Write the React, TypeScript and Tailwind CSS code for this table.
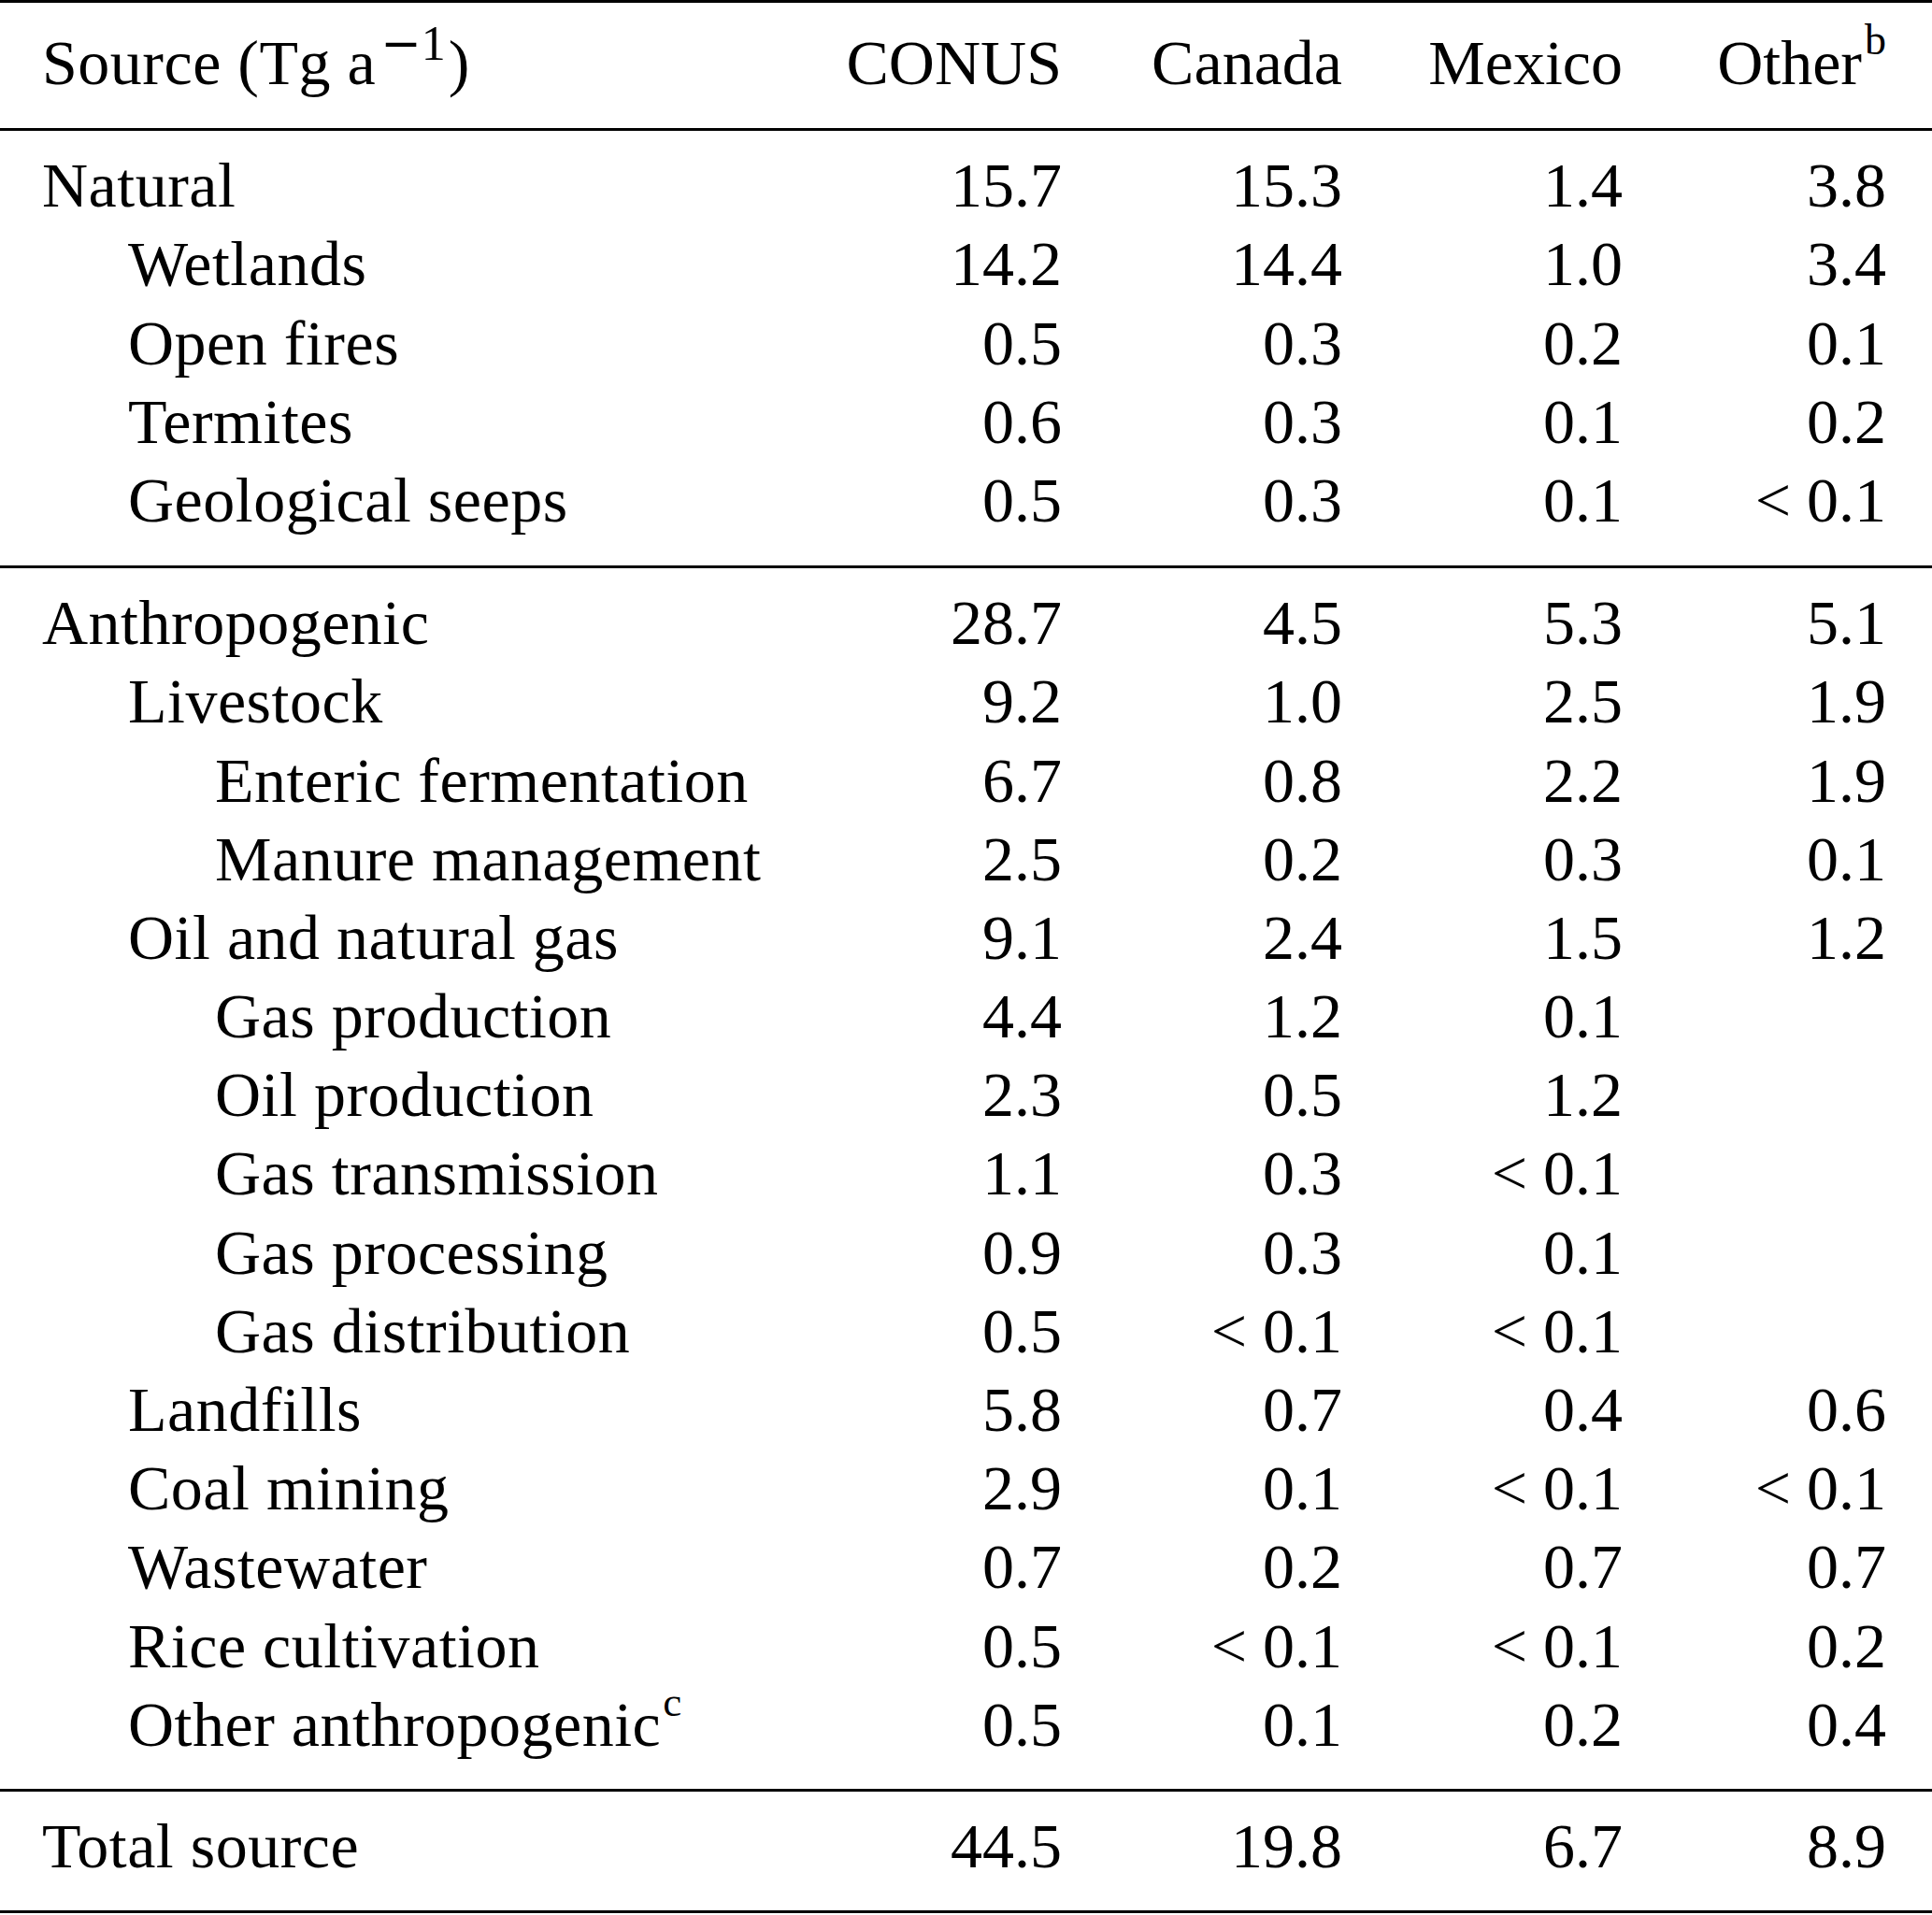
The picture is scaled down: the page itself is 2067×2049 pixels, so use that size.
import React from "react";

type Row = { label: React.ReactNode; level: 0 | 1 | 2; v: [string, string, string, string] };

const natural: Row[] = [
  { label: "Natural", level: 0, v: ["15.7", "15.3", "1.4", "3.8"] },
  { label: "Wetlands", level: 1, v: ["14.2", "14.4", "1.0", "3.4"] },
  { label: "Open fires", level: 1, v: ["0.5", "0.3", "0.2", "0.1"] },
  { label: "Termites", level: 1, v: ["0.6", "0.3", "0.1", "0.2"] },
  { label: "Geological seeps", level: 1, v: ["0.5", "0.3", "0.1", "< 0.1"] },
];

const anthro: Row[] = [
  { label: "Anthropogenic", level: 0, v: ["28.7", "4.5", "5.3", "5.1"] },
  { label: "Livestock", level: 1, v: ["9.2", "1.0", "2.5", "1.9"] },
  { label: "Enteric fermentation", level: 2, v: ["6.7", "0.8", "2.2", "1.9"] },
  { label: "Manure management", level: 2, v: ["2.5", "0.2", "0.3", "0.1"] },
  { label: "Oil and natural gas", level: 1, v: ["9.1", "2.4", "1.5", "1.2"] },
  { label: "Gas production", level: 2, v: ["4.4", "1.2", "0.1", ""] },
  { label: "Oil production", level: 2, v: ["2.3", "0.5", "1.2", ""] },
  { label: "Gas transmission", level: 2, v: ["1.1", "0.3", "< 0.1", ""] },
  { label: "Gas processing", level: 2, v: ["0.9", "0.3", "0.1", ""] },
  { label: "Gas distribution", level: 2, v: ["0.5", "< 0.1", "< 0.1", ""] },
  { label: "Landfills", level: 1, v: ["5.8", "0.7", "0.4", "0.6"] },
  { label: "Coal mining", level: 1, v: ["2.9", "0.1", "< 0.1", "< 0.1"] },
  { label: "Wastewater", level: 1, v: ["0.7", "0.2", "0.7", "0.7"] },
  { label: "Rice cultivation", level: 1, v: ["0.5", "< 0.1", "< 0.1", "0.2"] },
  {
    label: (
      <>
        Other anthropogenic<sup className="text-[45px] -top-[32px] ml-[2px]">c</sup>
      </>
    ),
    level: 1,
    v: ["0.5", "0.1", "0.2", "0.4"],
  },
];

const total: Row[] = [{ label: "Total source", level: 0, v: ["44.5", "19.8", "6.7", "8.9"] }];

const indent = ["pl-0", "pl-[92px]", "pl-[185px]"];

const gridCls = "grid grid-cols-[1fr_300px_300px_300px_282px] h-[84.2px] leading-[84.2px] whitespace-nowrap";

function TableRow({ r }: { r: Row }) {
  return (
    <div className={gridCls}>
      <div className={`${indent[r.level]} tracking-[0.5px]`}>{r.label}</div>
      {r.v.map((x, i) => (
        <div key={i} className="text-right">
          {x}
        </div>
      ))}
    </div>
  );
}

function Rule() {
  return <div className="border-t-[3px] border-black ml-[-45px] mr-[-49px]" />;
}

export default function App() {
  return (
    <div className="w-[2067px] h-[2049px] overflow-hidden bg-white text-black">
      <div
        className="text-[68px] pl-[45px] pr-[49px]"
        style={{ fontFamily: '"Liberation Serif", "Times New Roman", serif' }}
      >
        <Rule />
        {/* header */}
        <div className="pt-[22px] pb-[28px]">
          <div className={gridCls}>
            <div className="tracking-[0.5px]">
              Source (Tg a
              <sup className="text-[52px] -top-[26px] ml-[5px] mr-[3px] tracking-normal">
                <span style={{ fontFamily: '"DejaVu Serif", serif' }}>−</span>1
              </sup>
              )
            </div>
            <div className="text-right">CONUS</div>
            <div className="text-right">Canada</div>
            <div className="text-right">Mexico</div>
            <div className="text-right">
              Other<sup className="text-[46px] -top-[32px] ml-[3px]">b</sup>
            </div>
          </div>
        </div>
        <Rule />
        <div className="pt-[16px] pb-[28px]">
          {natural.map((r, i) => (
            <TableRow key={i} r={r} />
          ))}
        </div>
        <Rule />
        <div className="pt-[16px] pb-[27px]">
          {anthro.map((r, i) => (
            <TableRow key={i} r={r} />
          ))}
        </div>
        <Rule />
        <div className="pt-[16px] pb-[27px]">
          {total.map((r, i) => (
            <TableRow key={i} r={r} />
          ))}
        </div>
        <Rule />
      </div>
    </div>
  );
}
